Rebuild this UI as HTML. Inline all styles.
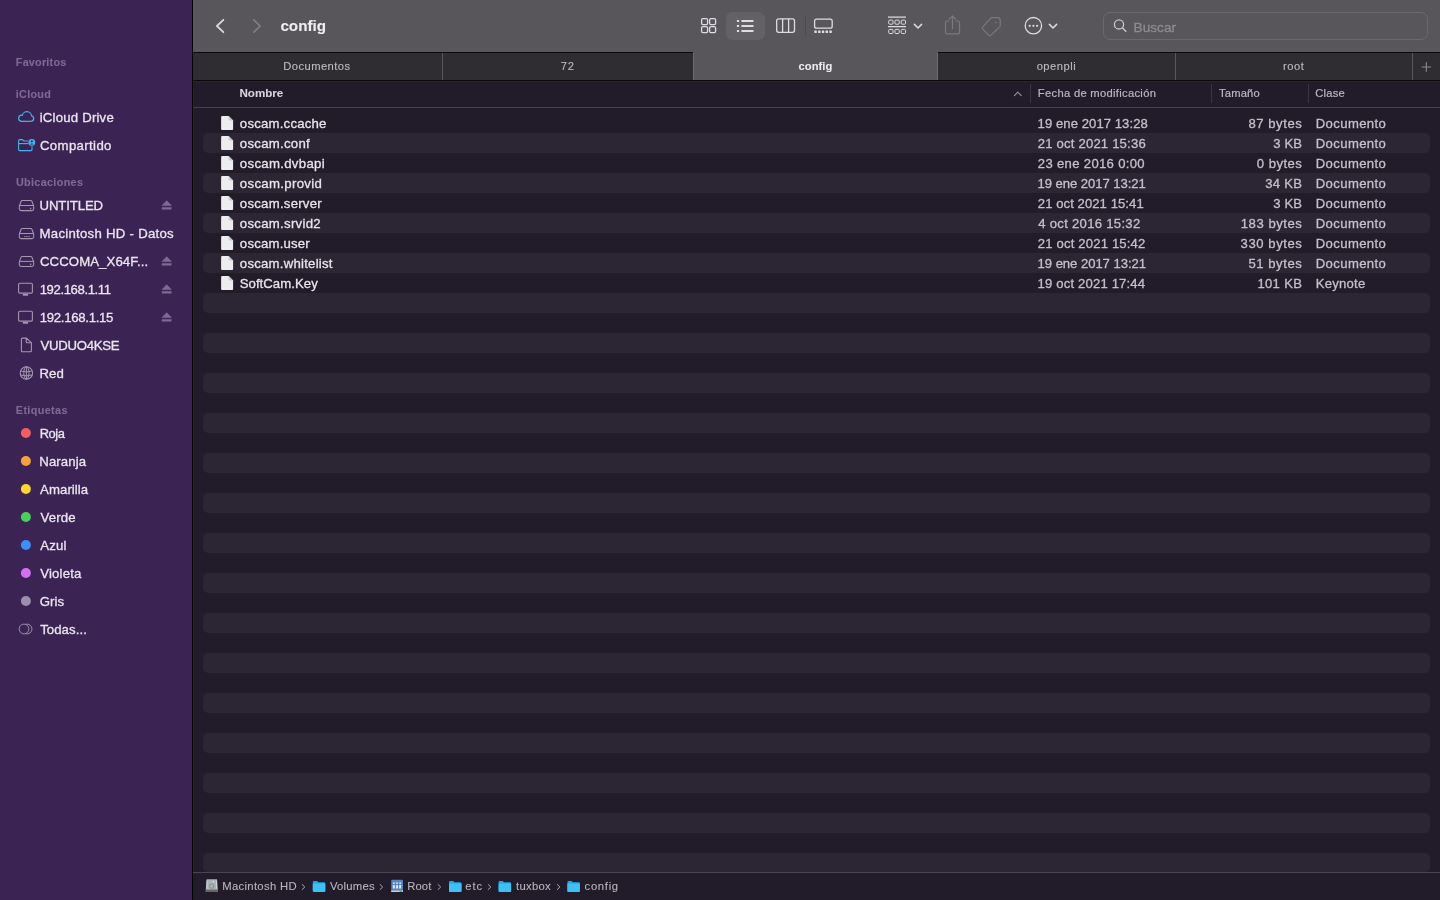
<!DOCTYPE html><html><head><meta charset="utf-8"><style>
*{margin:0;padding:0;box-sizing:border-box}
html,body{width:1440px;height:900px;overflow:hidden;-webkit-font-smoothing:antialiased;background:#221b29;font-family:"Liberation Sans",sans-serif;}
div{position:absolute}
.t{white-space:nowrap;line-height:1;will-change:transform}
svg{position:absolute;left:0;top:0}
</style></head><body>
<div style="left:0px;top:0px;width:192px;height:900px;background:#3b2453;"></div>
<div style="left:192px;top:0px;width:1px;height:900px;background:#000000;"></div>
<div style="left:193px;top:0px;width:1247px;height:52px;background:#58555b;"></div>
<div style="left:193px;top:52px;width:1247px;height:1px;background:#0a0a0b;"></div>
<div style="left:726px;top:12px;width:39px;height:28px;background:#636066;border-radius:6px"></div>
<div style="left:805px;top:16px;width:1px;height:20px;background:#4d4a50;"></div>
<div style="left:1103px;top:12px;width:325px;height:28px;background:transparent;border:1px solid #6b686e;border-radius:7px"></div>
<div style="left:193px;top:53px;width:1247px;height:27px;background:#2f2d31;"></div>
<div style="left:193px;top:80px;width:1247px;height:1px;background:#0a0a0b;"></div>
<div style="left:693px;top:52px;width:245px;height:28px;background:#58555b;"></div>
<div style="left:693px;top:53px;width:1px;height:27px;background:#6d6a70;"></div>
<div style="left:937px;top:53px;width:1px;height:27px;background:#6d6a70;"></div>
<div style="left:442px;top:53px;width:1px;height:27px;background:#59575c;"></div>
<div style="left:1175px;top:53px;width:1px;height:27px;background:#59575c;"></div>
<div style="left:1412px;top:53px;width:1px;height:27px;background:#59575c;"></div>
<div style="left:193px;top:107px;width:1247px;height:1px;background:#47404e;"></div>
<div style="left:193px;top:81px;width:1247px;height:1px;background:#29222f;"></div>
<div style="left:193px;top:81px;width:1px;height:791px;background:#28232d;"></div>
<div style="left:1030px;top:84px;width:1px;height:19px;background:#3a3440;"></div>
<div style="left:1211px;top:84px;width:1px;height:19px;background:#3a3440;"></div>
<div style="left:1308px;top:84px;width:1px;height:19px;background:#3a3440;"></div>
<div style="left:203px;top:133px;width:1227px;height:20px;background:#2c2634;border-radius:5px"></div>
<div style="left:203px;top:173px;width:1227px;height:20px;background:#2c2634;border-radius:5px"></div>
<div style="left:203px;top:213px;width:1227px;height:20px;background:#2c2634;border-radius:5px"></div>
<div style="left:203px;top:253px;width:1227px;height:20px;background:#2c2634;border-radius:5px"></div>
<div style="left:203px;top:293px;width:1227px;height:20px;background:#2c2634;border-radius:5px"></div>
<div style="left:203px;top:333px;width:1227px;height:20px;background:#2c2634;border-radius:5px"></div>
<div style="left:203px;top:373px;width:1227px;height:20px;background:#2c2634;border-radius:5px"></div>
<div style="left:203px;top:413px;width:1227px;height:20px;background:#2c2634;border-radius:5px"></div>
<div style="left:203px;top:453px;width:1227px;height:20px;background:#2c2634;border-radius:5px"></div>
<div style="left:203px;top:493px;width:1227px;height:20px;background:#2c2634;border-radius:5px"></div>
<div style="left:203px;top:533px;width:1227px;height:20px;background:#2c2634;border-radius:5px"></div>
<div style="left:203px;top:573px;width:1227px;height:20px;background:#2c2634;border-radius:5px"></div>
<div style="left:203px;top:613px;width:1227px;height:20px;background:#2c2634;border-radius:5px"></div>
<div style="left:203px;top:653px;width:1227px;height:20px;background:#2c2634;border-radius:5px"></div>
<div style="left:203px;top:693px;width:1227px;height:20px;background:#2c2634;border-radius:5px"></div>
<div style="left:203px;top:733px;width:1227px;height:20px;background:#2c2634;border-radius:5px"></div>
<div style="left:203px;top:773px;width:1227px;height:20px;background:#2c2634;border-radius:5px"></div>
<div style="left:203px;top:813px;width:1227px;height:20px;background:#2c2634;border-radius:5px"></div>
<div style="left:203px;top:853px;width:1227px;height:19px;background:#2c2634;border-radius:5px"></div>
<div style="left:193px;top:872px;width:1247px;height:1px;background:#4a4451;"></div>
<div style="left:193px;top:873px;width:1247px;height:27px;background:#221b29;"></div>
<svg width="1440" height="900" viewBox="0 0 1440 900" style="will-change:transform"><circle cx="21.8" cy="118.3" r="3.72" fill="#3fb6f2"/><circle cx="26.9" cy="116.4" r="5.32" fill="#3fb6f2"/><circle cx="30.9" cy="118.5" r="3.37" fill="#3fb6f2"/><rect x="21.8" y="117" width="9.1" height="4.8700000000000045" fill="#3fb6f2"/><circle cx="21.8" cy="118.3" r="2.48" fill="#3b2453"/><circle cx="26.9" cy="116.4" r="4.08" fill="#3b2453"/><circle cx="30.9" cy="118.5" r="2.13" fill="#3b2453"/><rect x="21.8" y="116" width="9.1" height="4.6299999999999955" fill="#3b2453"/><path d="M18.6 141 V149.6 Q18.6 150.6 19.6 150.6 H31 Q32 150.6 32 149.6 V146.5" fill="none" stroke="#3fb6f2" stroke-width="1.1"/><path d="M18.6 141 Q18.6 139.6 19.8 139.6 H22.4 L23.8 141 H28.2" fill="none" stroke="#3fb6f2" stroke-width="1.1"/><path d="M18.6 143.6 H28.4" fill="none" stroke="#3fb6f2" stroke-width="1.1"/><circle cx="31.8" cy="142.4" r="3.4" fill="#3fb6f2"/><circle cx="31.8" cy="141.3" r="1.1" fill="#3b2453"/><path d="M29.9 144.6 Q31.8 142.3 33.7 144.6 Z" fill="#3b2453"/><path d="M22.3 200.5 H30.7 Q31.6 200.5 32 201.5 L33.5 205.5 Q33.7 206.1 33.7 206.9 V208.7 Q33.7 210.6 31.8 210.6 H21.2 Q19.3 210.6 19.3 208.7 V206.9 Q19.3 206.1 19.5 205.5 L21 201.5 Q21.4 200.5 22.3 200.5 Z" fill="none" stroke="#a497af" stroke-width="1.05"/><path d="M19.8 205.5 H33.2" stroke="#a497af" stroke-width="1.0"/><circle cx="30.6" cy="208.5" r="0.8" fill="#a497af"/><path d="M22.3 228.5 H30.7 Q31.6 228.5 32 229.5 L33.5 233.5 Q33.7 234.1 33.7 234.9 V236.7 Q33.7 238.6 31.8 238.6 H21.2 Q19.3 238.6 19.3 236.7 V234.9 Q19.3 234.1 19.5 233.5 L21 229.5 Q21.4 228.5 22.3 228.5 Z" fill="none" stroke="#a497af" stroke-width="1.05"/><path d="M19.8 233.5 H33.2" stroke="#a497af" stroke-width="1.0"/><path d="M24.3 236.5 H29.8" stroke="#a497af" stroke-width="1" stroke-dasharray="1.2 0.9"/><path d="M22.3 256.4 H30.7 Q31.6 256.4 32 257.4 L33.5 261.4 Q33.7 262.0 33.7 262.8 V264.6 Q33.7 266.5 31.8 266.5 H21.2 Q19.3 266.5 19.3 264.6 V262.8 Q19.3 262.0 19.5 261.4 L21 257.4 Q21.4 256.4 22.3 256.4 Z" fill="none" stroke="#a497af" stroke-width="1.05"/><path d="M19.8 261.4 H33.2" stroke="#a497af" stroke-width="1.0"/><circle cx="30.6" cy="264.4" r="0.8" fill="#a497af"/><rect x="18.6" y="283.3" width="13.8" height="9.8" rx="1.2" fill="none" stroke="#a497af" stroke-width="1.1"/><rect x="22.8" y="293.9" width="5.3" height="1.8" fill="#a497af"/><rect x="18.6" y="311.3" width="13.8" height="9.8" rx="1.2" fill="none" stroke="#a497af" stroke-width="1.1"/><rect x="22.8" y="321.9" width="5.3" height="1.8" fill="#a497af"/><path d="M22.3 338.1 H26.4 L31.4 342.7 V350.7 Q31.4 351.7 30.4 351.7 H22.3 Q21.4 351.7 21.4 350.7 V339.1 Q21.4 338.1 22.3 338.1 Z M26.2 338.1 V341.7 Q26.2 342.7 27.2 342.7 H31.4" fill="none" stroke="#a497af" stroke-width="1.1"/><circle cx="26.4" cy="372.9" r="6.2" fill="none" stroke="#a497af" stroke-width="1.1"/><ellipse cx="26.4" cy="372.9" rx="2.6" ry="6.2" fill="none" stroke="#a497af" stroke-width="1"/><path d="M20.4 370.9 Q26.4 372.9 32.4 370.9 M20.4 374.9 Q26.4 376.9 32.4 374.9 M26.4 366.7 V379.1" fill="none" stroke="#a497af" stroke-width="1"/><path d="M166.7 200.7 L171.4 205.6 H162 Z" fill="#7e6a94" stroke="#7e6a94" stroke-width="0.6" stroke-linejoin="round"/><rect x="161.8" y="207.3" width="9.8" height="2.2" rx="0.5" fill="#7e6a94"/><path d="M166.7 256.7 L171.4 261.6 H162 Z" fill="#7e6a94" stroke="#7e6a94" stroke-width="0.6" stroke-linejoin="round"/><rect x="161.8" y="263.3" width="9.8" height="2.2" rx="0.5" fill="#7e6a94"/><path d="M166.7 284.7 L171.4 289.6 H162 Z" fill="#7e6a94" stroke="#7e6a94" stroke-width="0.6" stroke-linejoin="round"/><rect x="161.8" y="291.3" width="9.8" height="2.2" rx="0.5" fill="#7e6a94"/><path d="M166.7 312.7 L171.4 317.6 H162 Z" fill="#7e6a94" stroke="#7e6a94" stroke-width="0.6" stroke-linejoin="round"/><rect x="161.8" y="319.3" width="9.8" height="2.2" rx="0.5" fill="#7e6a94"/><circle cx="25.9" cy="433" r="5" fill="#f35f60"/><circle cx="25.9" cy="461" r="5" fill="#f7a13b"/><circle cx="25.9" cy="489" r="5" fill="#fcd530"/><circle cx="25.9" cy="517" r="5" fill="#47d257"/><circle cx="25.9" cy="545" r="5" fill="#3b90f7"/><circle cx="25.9" cy="573" r="5" fill="#d56ff1"/><circle cx="25.9" cy="601" r="5" fill="#9b8fad"/><circle cx="24" cy="629" r="4.9" fill="none" stroke="#a497af" stroke-width="0.9"/><path d="M25.55 624.35 A4.9 4.9 0 1 1 25.55 633.65" fill="none" stroke="#a497af" stroke-width="0.9"/><path d="M223.4 19.8 L216.9 26 L223.4 32.2" fill="none" stroke="#dcd9df" stroke-width="1.75" stroke-linecap="round" stroke-linejoin="round"/><path d="M253.8 19.8 L260.1 26 L253.8 32.2" fill="none" stroke="#807d83" stroke-width="1.75" stroke-linecap="round" stroke-linejoin="round"/><rect x="701.6" y="18.6" width="6" height="6" rx="1.3" fill="none" stroke="#dedbe1" stroke-width="1.3"/><rect x="701.6" y="26.6" width="6" height="6" rx="1.3" fill="none" stroke="#dedbe1" stroke-width="1.3"/><rect x="709.6" y="18.6" width="6" height="6" rx="1.3" fill="none" stroke="#dedbe1" stroke-width="1.3"/><rect x="709.6" y="26.6" width="6" height="6" rx="1.3" fill="none" stroke="#dedbe1" stroke-width="1.3"/><rect x="736.9" y="20" width="2.2" height="2" fill="#dedbe1"/><rect x="741.2" y="20.1" width="12.5" height="1.8" rx="0.9" fill="#dedbe1"/><rect x="736.9" y="25" width="2.2" height="2" fill="#dedbe1"/><rect x="741.2" y="25.1" width="12.5" height="1.8" rx="0.9" fill="#dedbe1"/><rect x="736.9" y="30" width="2.2" height="2" fill="#dedbe1"/><rect x="741.2" y="30.1" width="12.5" height="1.8" rx="0.9" fill="#dedbe1"/><rect x="776.7" y="18.8" width="17.8" height="13.5" rx="2" fill="none" stroke="#dedbe1" stroke-width="1.3"/><path d="M782.6 18.8 V32.3 M788.6 18.8 V32.3" stroke="#dedbe1" stroke-width="1.3"/><rect x="814.6" y="19.2" width="17.6" height="9" rx="2" fill="none" stroke="#dedbe1" stroke-width="1.3"/><rect x="814.30" y="30.4" width="2.5" height="2.5" rx="0.3" fill="#dedbe1"/><rect x="818.05" y="30.4" width="2.5" height="2.5" rx="0.3" fill="#dedbe1"/><rect x="821.80" y="30.4" width="2.5" height="2.5" rx="0.3" fill="#dedbe1"/><rect x="825.55" y="30.4" width="2.5" height="2.5" rx="0.3" fill="#dedbe1"/><rect x="829.30" y="30.4" width="2.5" height="2.5" rx="0.3" fill="#dedbe1"/><path d="M888 17.2 H906 M888 26.6 H906" stroke="#dedbe1" stroke-width="1.2"/><rect x="888.70" y="20.1" width="4.3" height="4.1" rx="1" fill="none" stroke="#dedbe1" stroke-width="1.0"/><rect x="888.70" y="29.4" width="4.3" height="4.1" rx="1" fill="none" stroke="#dedbe1" stroke-width="1.0"/><rect x="894.95" y="20.1" width="4.3" height="4.1" rx="1" fill="none" stroke="#dedbe1" stroke-width="1.0"/><rect x="894.95" y="29.4" width="4.3" height="4.1" rx="1" fill="none" stroke="#dedbe1" stroke-width="1.0"/><rect x="901.20" y="20.1" width="4.3" height="4.1" rx="1" fill="none" stroke="#dedbe1" stroke-width="1.0"/><rect x="901.20" y="29.4" width="4.3" height="4.1" rx="1" fill="none" stroke="#dedbe1" stroke-width="1.0"/><path d="M914.4 24.4 L918 28 L921.6 24.4" fill="none" stroke="#dedbe1" stroke-width="1.5" stroke-linecap="round" stroke-linejoin="round"/><path d="M1049.4 24.4 L1053 28 L1056.6 24.4" fill="none" stroke="#dedbe1" stroke-width="1.5" stroke-linecap="round" stroke-linejoin="round"/><path d="M949.5 21 H946.8 Q945.5 21 945.5 22.3 V32.6 Q945.5 33.9 946.8 33.9 H958.2 Q959.5 33.9 959.5 32.6 V22.3 Q959.5 21 958.2 21 H955.5" fill="none" stroke="#7b787e" stroke-width="1.2"/><path d="M952.5 28.5 V16.2 M949.2 19.2 L952.5 16 L955.8 19.2" fill="none" stroke="#7b787e" stroke-width="1.2" stroke-linecap="round" stroke-linejoin="round"/><path d="M991.2 17.6 H997.6 Q1000.2 17.6 1000.2 20.2 V26.4 L990.8 35.4 Q989.9 36.2 989 35.3 L982.6 28.9 Q981.8 28 982.6 27.2 Z" fill="none" stroke="#7b787e" stroke-width="1.2" stroke-linejoin="round"/><circle cx="995.6" cy="22.3" r="0.9" fill="#7b787e"/><circle cx="1033.4" cy="25.7" r="8.2" fill="none" stroke="#dedbe1" stroke-width="1.3"/><circle cx="1029.7" cy="25.8" r="1.1" fill="#dedbe1"/><circle cx="1033.4" cy="25.8" r="1.1" fill="#dedbe1"/><circle cx="1037.1000000000001" cy="25.8" r="1.1" fill="#dedbe1"/><circle cx="1119" cy="24.4" r="4.6" fill="none" stroke="#c9c6cc" stroke-width="1.3"/><path d="M1122.4 27.8 L1125.8 31.2" stroke="#c9c6cc" stroke-width="1.5" stroke-linecap="round"/><path d="M1426.3 62.3 V71.7 M1421.6 67 H1431" stroke="#8e8b91" stroke-width="1.1"/><path d="M1014.4 95.6 L1017.8 92.2 L1021.2 95.6" fill="none" stroke="#9a94a0" stroke-width="1.1" stroke-linecap="round" stroke-linejoin="round"/><path d="M222.1 116.1 H228.6 L233.1 120.6 V129.0 Q233.1 130.0 232.1 130.0 H222.1 Q221.1 130.0 221.1 129.0 V117.1 Q221.1 116.1 222.1 116.1 Z" fill="#ededef"/><path d="M228.6 116.1 V119.6 Q228.6 120.6 229.6 120.6 H233.1 Z" fill="#c9c8cc"/><path d="M222.1 136.1 H228.6 L233.1 140.6 V149.0 Q233.1 150.0 232.1 150.0 H222.1 Q221.1 150.0 221.1 149.0 V137.1 Q221.1 136.1 222.1 136.1 Z" fill="#ededef"/><path d="M228.6 136.1 V139.6 Q228.6 140.6 229.6 140.6 H233.1 Z" fill="#c9c8cc"/><path d="M222.1 156.1 H228.6 L233.1 160.6 V169.0 Q233.1 170.0 232.1 170.0 H222.1 Q221.1 170.0 221.1 169.0 V157.1 Q221.1 156.1 222.1 156.1 Z" fill="#ededef"/><path d="M228.6 156.1 V159.6 Q228.6 160.6 229.6 160.6 H233.1 Z" fill="#c9c8cc"/><path d="M222.1 176.1 H228.6 L233.1 180.6 V189.0 Q233.1 190.0 232.1 190.0 H222.1 Q221.1 190.0 221.1 189.0 V177.1 Q221.1 176.1 222.1 176.1 Z" fill="#ededef"/><path d="M228.6 176.1 V179.6 Q228.6 180.6 229.6 180.6 H233.1 Z" fill="#c9c8cc"/><path d="M222.1 196.1 H228.6 L233.1 200.6 V209.0 Q233.1 210.0 232.1 210.0 H222.1 Q221.1 210.0 221.1 209.0 V197.1 Q221.1 196.1 222.1 196.1 Z" fill="#ededef"/><path d="M228.6 196.1 V199.6 Q228.6 200.6 229.6 200.6 H233.1 Z" fill="#c9c8cc"/><path d="M222.1 216.1 H228.6 L233.1 220.6 V229.0 Q233.1 230.0 232.1 230.0 H222.1 Q221.1 230.0 221.1 229.0 V217.1 Q221.1 216.1 222.1 216.1 Z" fill="#ededef"/><path d="M228.6 216.1 V219.6 Q228.6 220.6 229.6 220.6 H233.1 Z" fill="#c9c8cc"/><path d="M222.1 236.1 H228.6 L233.1 240.6 V249.0 Q233.1 250.0 232.1 250.0 H222.1 Q221.1 250.0 221.1 249.0 V237.1 Q221.1 236.1 222.1 236.1 Z" fill="#ededef"/><path d="M228.6 236.1 V239.6 Q228.6 240.6 229.6 240.6 H233.1 Z" fill="#c9c8cc"/><path d="M222.1 256.1 H228.6 L233.1 260.6 V269.0 Q233.1 270.0 232.1 270.0 H222.1 Q221.1 270.0 221.1 269.0 V257.1 Q221.1 256.1 222.1 256.1 Z" fill="#ededef"/><path d="M228.6 256.1 V259.6 Q228.6 260.6 229.6 260.6 H233.1 Z" fill="#c9c8cc"/><path d="M222.1 276.1 H228.6 L233.1 280.6 V289.0 Q233.1 290.0 232.1 290.0 H222.1 Q221.1 290.0 221.1 289.0 V277.1 Q221.1 276.1 222.1 276.1 Z" fill="#ededef"/><path d="M228.6 276.1 V279.6 Q228.6 280.6 229.6 280.6 H233.1 Z" fill="#c9c8cc"/><path d="M206.60000000000002 879.3 H217.0 L217.8 889.6 V892 H205.8 V889.6 Z" fill="#a9b3b7"/><rect x="205.8" y="889.6" width="12" height="2.4" fill="#63675f"/><circle cx="211.60000000000002" cy="886.2" r="2.2" fill="none" stroke="#8a9296" stroke-width="1"/><path d="M207.0 880.5 V888.5 M216.60000000000002 880.5 V888.5" stroke="#d5dde0" stroke-width="0.8"/><circle cx="213.20000000000002" cy="881.6" r="0.8" fill="#dfe6e8"/><path d="M312.8 882.2 Q312.8 881 314.0 881 H317.0 L318.2 882.2 H324.1 Q325.3 882.2 325.3 883.4 V890.8 Q325.3 892 324.1 892 H314.0 Q312.8 892 312.8 890.8 Z" fill="#1fa8ea"/><rect x="312.8" y="883.6" width="12.5" height="8.4" rx="1" fill="#3cc0f7"/><rect x="391.2" y="879.8" width="11.8" height="12.2" rx="1.2" fill="#5785c4"/><rect x="391.2" y="890.6" width="11.8" height="1.4" fill="#d6d2c2"/><rect x="399.6" y="890.6" width="2.4" height="1.4" fill="#37d23b"/><circle cx="393.90" cy="883.1" r="0.9" fill="#eef3fb"/><path d="M392.90 888.6 V885.6 Q393.90 883.9 394.90 885.6 V888.6 Z" fill="#e6edf8"/><circle cx="397.00" cy="883.1" r="0.9" fill="#eef3fb"/><path d="M396.00 888.6 V885.6 Q397.00 883.9 398.00 885.6 V888.6 Z" fill="#e6edf8"/><circle cx="400.10" cy="883.1" r="0.9" fill="#eef3fb"/><path d="M399.10 888.6 V885.6 Q400.10 883.9 401.10 885.6 V888.6 Z" fill="#e6edf8"/><path d="M449 882.2 Q449 881 450.2 881 H453.2 L454.4 882.2 H460.3 Q461.5 882.2 461.5 883.4 V890.8 Q461.5 892 460.3 892 H450.2 Q449 892 449 890.8 Z" fill="#1fa8ea"/><rect x="449" y="883.6" width="12.5" height="8.4" rx="1" fill="#3cc0f7"/><path d="M498.6 882.2 Q498.6 881 499.8 881 H502.8 L504.0 882.2 H509.90000000000003 Q511.1 882.2 511.1 883.4 V890.8 Q511.1 892 509.90000000000003 892 H499.8 Q498.6 892 498.6 890.8 Z" fill="#1fa8ea"/><rect x="498.6" y="883.6" width="12.5" height="8.4" rx="1" fill="#3cc0f7"/><path d="M567.4 882.2 Q567.4 881 568.6 881 H571.6 L572.8 882.2 H578.6999999999999 Q579.9 882.2 579.9 883.4 V890.8 Q579.9 892 578.6999999999999 892 H568.6 Q567.4 892 567.4 890.8 Z" fill="#1fa8ea"/><rect x="567.4" y="883.6" width="12.5" height="8.4" rx="1" fill="#3cc0f7"/><path d="M302.20000000000005 884.5 L304.8 887 L302.20000000000005 889.5" fill="none" stroke="#aaa5ae" stroke-width="1.0" stroke-linecap="round" stroke-linejoin="round"/><path d="M380.1 884.5 L382.7 887 L380.1 889.5" fill="none" stroke="#aaa5ae" stroke-width="1.0" stroke-linecap="round" stroke-linejoin="round"/><path d="M438.1 884.5 L440.7 887 L438.1 889.5" fill="none" stroke="#aaa5ae" stroke-width="1.0" stroke-linecap="round" stroke-linejoin="round"/><path d="M488.20000000000005 884.5 L490.8 887 L488.20000000000005 889.5" fill="none" stroke="#aaa5ae" stroke-width="1.0" stroke-linecap="round" stroke-linejoin="round"/><path d="M557.3000000000001 884.5 L559.9000000000001 887 L557.3000000000001 889.5" fill="none" stroke="#aaa5ae" stroke-width="1.0" stroke-linecap="round" stroke-linejoin="round"/><g font-family="Liberation Sans, sans-serif" style="white-space:pre"><text x="15.84" y="66.20" font-size="10.800" fill="#7e6a94" text-anchor="start" font-weight="bold" stroke="#7e6a94" stroke-width="0.1" letter-spacing="0.223">Favoritos</text><text x="15.84" y="98.10" font-size="10.800" fill="#7e6a94" text-anchor="start" font-weight="bold" stroke="#7e6a94" stroke-width="0.1" letter-spacing="0.263">iCloud</text><text x="15.95" y="186.25" font-size="10.800" fill="#7e6a94" text-anchor="start" font-weight="bold" stroke="#7e6a94" stroke-width="0.1" letter-spacing="0.337">Ubicaciones</text><text x="15.84" y="414.20" font-size="10.800" fill="#7e6a94" text-anchor="start" font-weight="bold" stroke="#7e6a94" stroke-width="0.1" letter-spacing="0.373">Etiquetas</text><text x="39.68" y="122.00" font-size="13.200" fill="#ebe5ef" text-anchor="start" stroke="#ebe5ef" stroke-width="0.3" letter-spacing="0.204">iCloud Drive</text><text x="39.94" y="149.80" font-size="13.200" fill="#ebe5ef" text-anchor="start" stroke="#ebe5ef" stroke-width="0.3" letter-spacing="0.372">Compartido</text><text x="39.54" y="210.00" font-size="13.200" fill="#ebe5ef" text-anchor="start" stroke="#ebe5ef" stroke-width="0.3" letter-spacing="-0.133">UNTITLED</text><text x="39.54" y="238.00" font-size="13.200" fill="#ebe5ef" text-anchor="start" stroke="#ebe5ef" stroke-width="0.3" letter-spacing="0.271">Macintosh HD - Datos</text><text x="39.94" y="265.90" font-size="13.200" fill="#ebe5ef" text-anchor="start" stroke="#ebe5ef" stroke-width="0.3" letter-spacing="0.092">CCCOMA_X64F...</text><text x="39.68" y="293.90" font-size="13.168" fill="#ebe5ef" text-anchor="start" stroke="#ebe5ef" stroke-width="0.3" letter-spacing="-0.400">192.168.1.11</text><text x="39.68" y="321.90" font-size="13.200" fill="#ebe5ef" text-anchor="start" stroke="#ebe5ef" stroke-width="0.3" letter-spacing="-0.294">192.168.1.15</text><text x="40.60" y="349.90" font-size="13.200" fill="#ebe5ef" text-anchor="start" stroke="#ebe5ef" stroke-width="0.3" letter-spacing="-0.302">VUDUO4KSE</text><text x="39.54" y="377.90" font-size="13.200" fill="#ebe5ef" text-anchor="start" stroke="#ebe5ef" stroke-width="0.3">Red</text><text x="39.67" y="438.00" font-size="12.929" fill="#ebe5ef" text-anchor="start" stroke="#ebe5ef" stroke-width="0.3" letter-spacing="-0.400">Roja</text><text x="39.34" y="466.00" font-size="13.200" fill="#ebe5ef" text-anchor="start" stroke="#ebe5ef" stroke-width="0.3" letter-spacing="0.076">Naranja</text><text x="40.10" y="494.00" font-size="13.200" fill="#ebe5ef" text-anchor="start" stroke="#ebe5ef" stroke-width="0.3" letter-spacing="0.064">Amarilla</text><text x="40.50" y="522.00" font-size="13.200" fill="#ebe5ef" text-anchor="start" stroke="#ebe5ef" stroke-width="0.3" letter-spacing="0.144">Verde</text><text x="40.20" y="550.00" font-size="13.200" fill="#ebe5ef" text-anchor="start" stroke="#ebe5ef" stroke-width="0.3" letter-spacing="0.161">Azul</text><text x="40.20" y="578.00" font-size="13.200" fill="#ebe5ef" text-anchor="start" stroke="#ebe5ef" stroke-width="0.3" letter-spacing="0.195">Violeta</text><text x="39.64" y="606.00" font-size="13.200" fill="#ebe5ef" text-anchor="start" stroke="#ebe5ef" stroke-width="0.3" letter-spacing="0.100">Gris</text><text x="40.14" y="634.20" font-size="13.200" fill="#ebe5ef" text-anchor="start" stroke="#ebe5ef" stroke-width="0.3" letter-spacing="0.079">Todas...</text><text x="280.39" y="31.10" font-size="15.225" fill="#efecf1" text-anchor="start" font-weight="bold" stroke="#efecf1" stroke-width="0.1">config</text><text x="1133.61" y="31.70" font-size="13.642" fill="#8e8b91" text-anchor="start" stroke="#8e8b91" stroke-width="0.3">Buscar</text><text x="283.30" y="70.30" font-size="11.200" fill="#bdbac0" text-anchor="start" stroke="#bdbac0" stroke-width="0.12" letter-spacing="0.433">Documentos</text><text x="560.74" y="70.30" font-size="11.200" fill="#bdbac0" text-anchor="start" stroke="#bdbac0" stroke-width="0.12" letter-spacing="0.788">72</text><text x="798.55" y="70.30" font-size="11.200" fill="#eeeaf0" text-anchor="start" font-weight="bold" stroke="#eeeaf0" stroke-width="0.05" letter-spacing="0.046">config</text><text x="1036.65" y="70.30" font-size="11.200" fill="#bdbac0" text-anchor="start" stroke="#bdbac0" stroke-width="0.12" letter-spacing="0.493">openpli</text><text x="1282.93" y="70.30" font-size="11.200" fill="#bdbac0" text-anchor="start" stroke="#bdbac0" stroke-width="0.12" letter-spacing="0.569">root</text><text x="239.49" y="97.30" font-size="11.603" fill="#d8d3dc" text-anchor="start" font-weight="bold" stroke="#d8d3dc" stroke-width="0.1">Nombre</text><text x="1037.85" y="97.10" font-size="11.200" fill="#bcb6c2" text-anchor="start" stroke="#bcb6c2" stroke-width="0.2" letter-spacing="0.306">Fecha de modificación</text><text x="1218.98" y="97.10" font-size="11.200" fill="#bcb6c2" text-anchor="start" stroke="#bcb6c2" stroke-width="0.2" letter-spacing="0.200">Tamaño</text><text x="1315.24" y="97.10" font-size="11.200" fill="#bcb6c2" text-anchor="start" stroke="#bcb6c2" stroke-width="0.2" letter-spacing="0.212">Clase</text><text x="239.87" y="128.00" font-size="13.200" fill="#e8e4ec" text-anchor="start" stroke="#e8e4ec" stroke-width="0.3" letter-spacing="0.210">oscam.ccache</text><text x="1037.58" y="128.00" font-size="13.100" fill="#c4bfc9" text-anchor="start" stroke="#c4bfc9" stroke-width="0.3" letter-spacing="0.062">19 ene 2017 13:28</text><text x="1248.48" y="128.00" font-size="13.100" fill="#c4bfc9" text-anchor="start" stroke="#c4bfc9" stroke-width="0.3" letter-spacing="0.543">87 bytes</text><text x="1315.75" y="128.00" font-size="13.100" fill="#c4bfc9" text-anchor="start" stroke="#c4bfc9" stroke-width="0.3" letter-spacing="0.391">Documento</text><text x="239.87" y="148.00" font-size="13.200" fill="#e8e4ec" text-anchor="start" stroke="#e8e4ec" stroke-width="0.3" letter-spacing="0.272">oscam.conf</text><text x="1037.85" y="148.00" font-size="13.100" fill="#c4bfc9" text-anchor="start" stroke="#c4bfc9" stroke-width="0.3" letter-spacing="0.186">21 oct 2021 15:36</text><text x="1273.28" y="148.00" font-size="13.100" fill="#c4bfc9" text-anchor="start" stroke="#c4bfc9" stroke-width="0.3" letter-spacing="0.117">3 KB</text><text x="1315.75" y="148.00" font-size="13.100" fill="#c4bfc9" text-anchor="start" stroke="#c4bfc9" stroke-width="0.3" letter-spacing="0.391">Documento</text><text x="239.87" y="168.00" font-size="13.200" fill="#e8e4ec" text-anchor="start" stroke="#e8e4ec" stroke-width="0.3" letter-spacing="0.310">oscam.dvbapi</text><text x="1037.85" y="168.00" font-size="13.100" fill="#c4bfc9" text-anchor="start" stroke="#c4bfc9" stroke-width="0.3" letter-spacing="0.322">23 ene 2016 0:00</text><text x="1256.78" y="168.00" font-size="13.100" fill="#c4bfc9" text-anchor="start" stroke="#c4bfc9" stroke-width="0.3" letter-spacing="0.473">0 bytes</text><text x="1315.75" y="168.00" font-size="13.100" fill="#c4bfc9" text-anchor="start" stroke="#c4bfc9" stroke-width="0.3" letter-spacing="0.391">Documento</text><text x="239.87" y="188.00" font-size="13.200" fill="#e8e4ec" text-anchor="start" stroke="#e8e4ec" stroke-width="0.3" letter-spacing="0.319">oscam.provid</text><text x="1037.58" y="188.00" font-size="13.100" fill="#c4bfc9" text-anchor="start" stroke="#c4bfc9" stroke-width="0.3" letter-spacing="-0.068">19 ene 2017 13:21</text><text x="1265.18" y="188.00" font-size="13.100" fill="#c4bfc9" text-anchor="start" stroke="#c4bfc9" stroke-width="0.3" letter-spacing="0.312">34 KB</text><text x="1315.75" y="188.00" font-size="13.100" fill="#c4bfc9" text-anchor="start" stroke="#c4bfc9" stroke-width="0.3" letter-spacing="0.391">Documento</text><text x="239.87" y="208.00" font-size="13.200" fill="#e8e4ec" text-anchor="start" stroke="#e8e4ec" stroke-width="0.3" letter-spacing="0.242">oscam.server</text><text x="1037.85" y="208.00" font-size="13.100" fill="#c4bfc9" text-anchor="start" stroke="#c4bfc9" stroke-width="0.3" letter-spacing="0.061">21 oct 2021 15:41</text><text x="1273.18" y="208.00" font-size="13.100" fill="#c4bfc9" text-anchor="start" stroke="#c4bfc9" stroke-width="0.3" letter-spacing="0.151">3 KB</text><text x="1315.75" y="208.00" font-size="13.100" fill="#c4bfc9" text-anchor="start" stroke="#c4bfc9" stroke-width="0.3" letter-spacing="0.391">Documento</text><text x="239.87" y="228.00" font-size="13.200" fill="#e8e4ec" text-anchor="start" stroke="#e8e4ec" stroke-width="0.3" letter-spacing="0.276">oscam.srvid2</text><text x="1038.24" y="228.00" font-size="13.100" fill="#c4bfc9" text-anchor="start" stroke="#c4bfc9" stroke-width="0.3" letter-spacing="0.295">4 oct 2016 15:32</text><text x="1240.78" y="228.00" font-size="13.100" fill="#c4bfc9" text-anchor="start" stroke="#c4bfc9" stroke-width="0.3" letter-spacing="0.536">183 bytes</text><text x="1315.75" y="228.00" font-size="13.100" fill="#c4bfc9" text-anchor="start" stroke="#c4bfc9" stroke-width="0.3" letter-spacing="0.391">Documento</text><text x="239.87" y="248.00" font-size="13.200" fill="#e8e4ec" text-anchor="start" stroke="#e8e4ec" stroke-width="0.3" letter-spacing="0.194">oscam.user</text><text x="1037.85" y="248.00" font-size="13.100" fill="#c4bfc9" text-anchor="start" stroke="#c4bfc9" stroke-width="0.3" letter-spacing="0.167">21 oct 2021 15:42</text><text x="1240.58" y="248.00" font-size="13.100" fill="#c4bfc9" text-anchor="start" stroke="#c4bfc9" stroke-width="0.3" letter-spacing="0.562">330 bytes</text><text x="1315.75" y="248.00" font-size="13.100" fill="#c4bfc9" text-anchor="start" stroke="#c4bfc9" stroke-width="0.3" letter-spacing="0.391">Documento</text><text x="239.87" y="268.00" font-size="13.200" fill="#e8e4ec" text-anchor="start" stroke="#e8e4ec" stroke-width="0.3" letter-spacing="0.226">oscam.whitelist</text><text x="1037.58" y="268.00" font-size="13.100" fill="#c4bfc9" text-anchor="start" stroke="#c4bfc9" stroke-width="0.3" letter-spacing="-0.049">19 ene 2017 13:21</text><text x="1248.48" y="268.00" font-size="13.100" fill="#c4bfc9" text-anchor="start" stroke="#c4bfc9" stroke-width="0.3" letter-spacing="0.543">51 bytes</text><text x="1315.75" y="268.00" font-size="13.100" fill="#c4bfc9" text-anchor="start" stroke="#c4bfc9" stroke-width="0.3" letter-spacing="0.391">Documento</text><text x="239.74" y="288.00" font-size="13.200" fill="#e8e4ec" text-anchor="start" stroke="#e8e4ec" stroke-width="0.3" letter-spacing="0.031">SoftCam.Key</text><text x="1037.58" y="288.00" font-size="13.100" fill="#c4bfc9" text-anchor="start" stroke="#c4bfc9" stroke-width="0.3" letter-spacing="0.167">19 oct 2021 17:44</text><text x="1257.38" y="288.00" font-size="13.100" fill="#c4bfc9" text-anchor="start" stroke="#c4bfc9" stroke-width="0.3" letter-spacing="0.341">101 KB</text><text x="1315.75" y="288.00" font-size="13.100" fill="#c4bfc9" text-anchor="start" stroke="#c4bfc9" stroke-width="0.3" letter-spacing="0.233">Keynote</text><text x="222.30" y="890.00" font-size="11.300" fill="#b9b4bd" text-anchor="start" stroke="#b9b4bd" stroke-width="0.1" letter-spacing="0.300">Macintosh HD</text><text x="329.90" y="890.00" font-size="11.300" fill="#b9b4bd" text-anchor="start" stroke="#b9b4bd" stroke-width="0.1" letter-spacing="0.227">Volumes</text><text x="407.20" y="890.00" font-size="11.300" fill="#b9b4bd" text-anchor="start" stroke="#b9b4bd" stroke-width="0.1" letter-spacing="0.120">Root</text><text x="465.35" y="890.00" font-size="11.300" fill="#b9b4bd" text-anchor="start" stroke="#b9b4bd" stroke-width="0.1" letter-spacing="0.824">etc</text><text x="516.09" y="890.00" font-size="11.300" fill="#b9b4bd" text-anchor="start" stroke="#b9b4bd" stroke-width="0.1" letter-spacing="0.281">tuxbox</text><text x="584.55" y="890.00" font-size="11.300" fill="#b9b4bd" text-anchor="start" stroke="#b9b4bd" stroke-width="0.1" letter-spacing="0.692">config</text></g></svg>
</body></html>
